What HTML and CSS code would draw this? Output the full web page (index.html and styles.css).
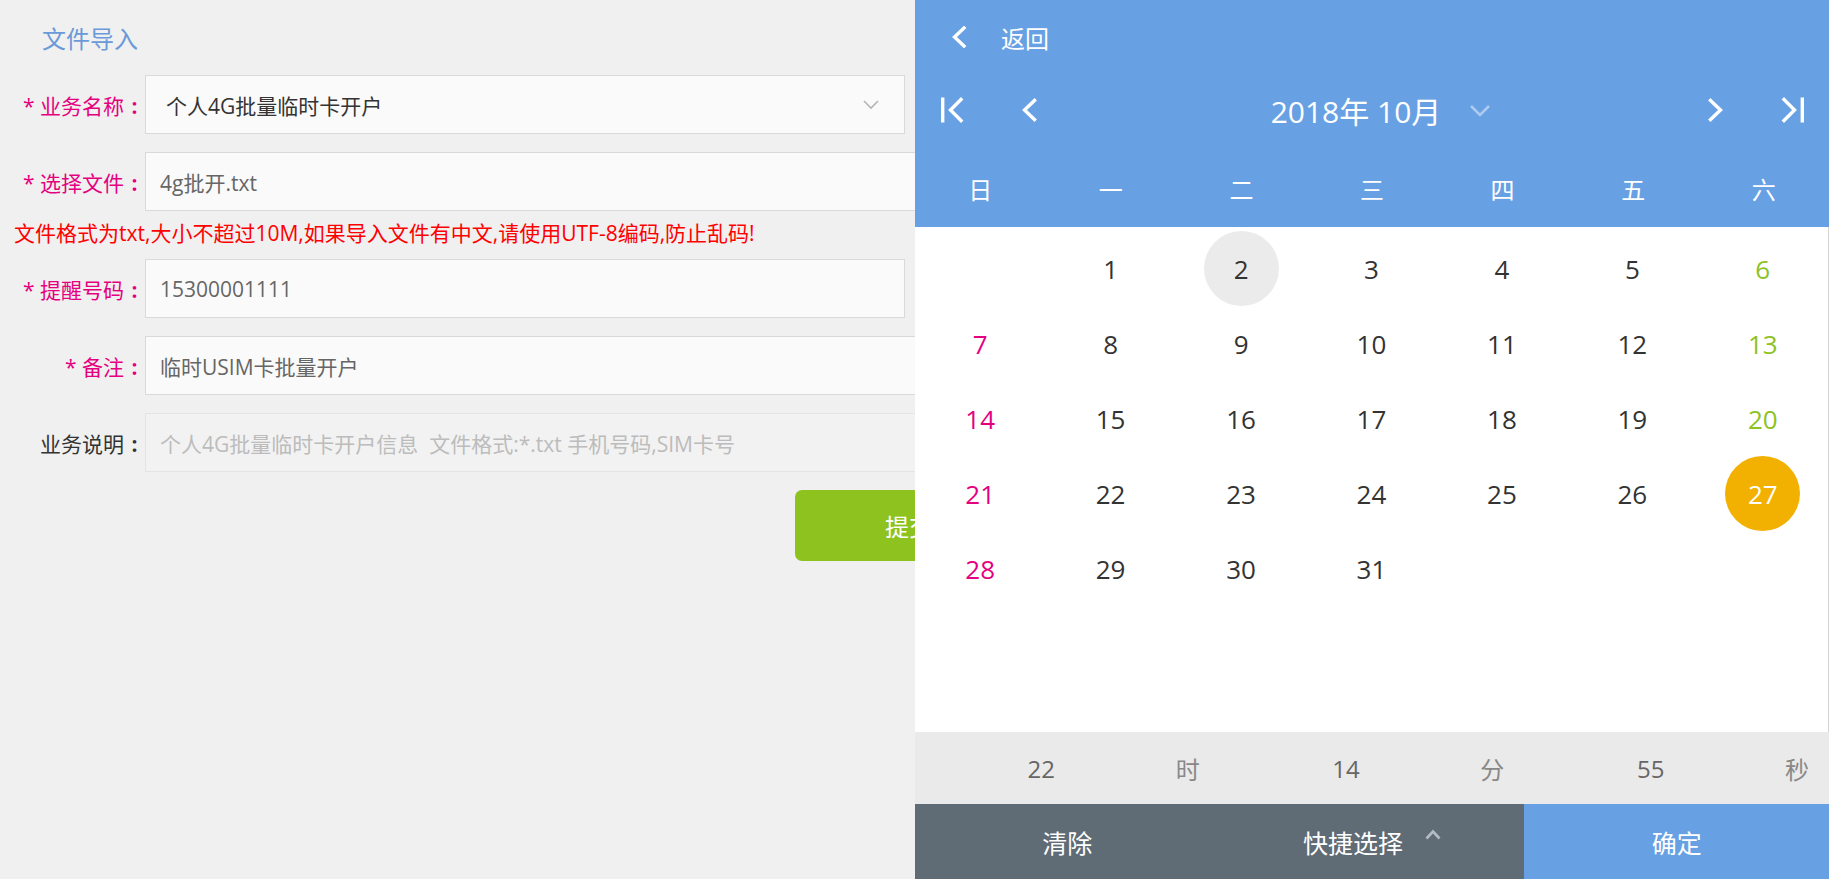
FILE: index.html
```html
<!DOCTYPE html>
<html lang="zh-CN">
<head>
<meta charset="utf-8">
<title>文件导入</title>
<link rel="stylesheet" href="styles.css">
</head>
<body>
<div class="page">
  <h2 class="title">文件导入</h2>
  <div class="form">
    <div class="row first">
      <label class="label">* 业务名称<span class="colon">:</span></label>
      <div class="field select short">
        <span>个人4G批量临时卡开户</span>
        <svg class="sel-arrow" width="16" height="10" viewBox="0 0 16 10"><polyline points="1,1 8,8 15,1" fill="none" stroke="#b5b5b5" stroke-width="1.6"/></svg>
      </div>
    </div>
    <div class="row">
      <label class="label">* 选择文件<span class="colon">:</span></label>
      <div class="field long">4g批开.txt</div>
    </div>
    <div class="error">文件格式为txt,大小不超过10M,如果导入文件有中文,请使用UTF-8编码,防止乱码!</div>
    <div class="row">
      <label class="label">* 提醒号码<span class="colon">:</span></label>
      <div class="field short">15300001111</div>
    </div>
    <div class="row">
      <label class="label">* 备注<span class="colon">:</span></label>
      <div class="field long">临时USIM卡批量开户</div>
    </div>
    <div class="row">
      <label class="label plain">业务说明<span class="colon">:</span></label>
      <div class="field long disabled">个人4G批量临时卡开户信息&nbsp; 文件格式:*.txt 手机号码,SIM卡号</div>
    </div>
    <div class="actions">
      <button class="submit">提交</button>
    </div>
  </div>
</div>

<div class="picker">
  <div class="pk-head">
    <div class="back-row">
      <svg width="16" height="22" viewBox="0 0 16 22"><polyline points="13,2 3.5,11 13,20" fill="none" stroke="#fff" stroke-width="3.4" stroke-linecap="square"/></svg>
      <span>返回</span>
    </div>
    <div class="nav-row">
      <div class="nav-group">
        <svg width="23" height="26" viewBox="0 0 23 26"><rect x="0" y="0.5" width="3.4" height="25" fill="#fff"/><polyline points="20,2.5 9.5,13 20,23.5" fill="none" stroke="#fff" stroke-width="3.4" stroke-linecap="square"/></svg>
        <svg class="gap" width="16" height="24" viewBox="0 0 16 24"><polyline points="13.5,2.5 3.5,12 13.5,21.5" fill="none" stroke="#fff" stroke-width="3.4" stroke-linecap="square"/></svg>
      </div>
      <div class="nav-title">
        <span>2018年 10月</span>
        <svg width="22" height="13" viewBox="0 0 22 13"><polyline points="2,2 11,11 20,2" fill="none" stroke="rgba(255,255,255,0.45)" stroke-width="2.6"/></svg>
      </div>
      <div class="nav-group">
        <svg width="16" height="24" viewBox="0 0 16 24"><polyline points="2.5,2.5 12.5,12 2.5,21.5" fill="none" stroke="#fff" stroke-width="3.4" stroke-linecap="square"/></svg>
        <svg class="gap" width="23" height="26" viewBox="0 0 23 26"><polyline points="3,2.5 13.5,13 3,23.5" fill="none" stroke="#fff" stroke-width="3.4" stroke-linecap="square"/><rect x="19.6" y="0.5" width="3.4" height="25" fill="#fff"/></svg>
      </div>
    </div>
    <div class="week-row">
      <span>日</span><span>一</span><span>二</span><span>三</span><span>四</span><span>五</span><span>六</span>
    </div>
  </div>

  <div class="days">
    <div class="day sun"></div>
    <div class="day"><span>1</span></div>
    <div class="day today"><span>2</span></div>
    <div class="day"><span>3</span></div>
    <div class="day"><span>4</span></div>
    <div class="day"><span>5</span></div>
    <div class="day sat"><span>6</span></div>

    <div class="day sun"><span>7</span></div>
    <div class="day"><span>8</span></div>
    <div class="day"><span>9</span></div>
    <div class="day"><span>10</span></div>
    <div class="day"><span>11</span></div>
    <div class="day"><span>12</span></div>
    <div class="day sat"><span>13</span></div>

    <div class="day sun"><span>14</span></div>
    <div class="day"><span>15</span></div>
    <div class="day"><span>16</span></div>
    <div class="day"><span>17</span></div>
    <div class="day"><span>18</span></div>
    <div class="day"><span>19</span></div>
    <div class="day sat"><span>20</span></div>

    <div class="day sun"><span>21</span></div>
    <div class="day"><span>22</span></div>
    <div class="day"><span>23</span></div>
    <div class="day"><span>24</span></div>
    <div class="day"><span>25</span></div>
    <div class="day"><span>26</span></div>
    <div class="day sat selected"><span>27</span></div>

    <div class="day sun"><span>28</span></div>
    <div class="day"><span>29</span></div>
    <div class="day"><span>30</span></div>
    <div class="day"><span>31</span></div>
  </div>

  <div class="time">
    <div class="tgroup"><span class="tnum">22</span><span class="tunit">时</span></div>
    <div class="tgroup"><span class="tnum">14</span><span class="tunit">分</span></div>
    <div class="tgroup"><span class="tnum">55</span><span class="tunit">秒</span></div>
  </div>

  <div class="btns">
    <div class="btn">清除</div>
    <div class="btn">快捷选择<svg width="16" height="11" viewBox="0 0 16 11"><polyline points="1.5,9.5 8,2.5 14.5,9.5" fill="none" stroke="#b3bcc4" stroke-width="2.6"/></svg></div>
    <div class="btn ok">确定</div>
  </div>
</div>
</body>
</html>
```

FILE: styles.css
```css
* {
  box-sizing: border-box;
}

html,
body {
  margin: 0;
  padding: 0;
}

body {
  width: 1830px;
  height: 879px;
  overflow: hidden;
  position: relative;
  background: #f0f0f0;
  font-family: "Open Sans", "Noto Sans CJK SC", sans-serif;
}

/* ---------- left form ---------- */
.page {
  padding-top: 23px;
}

.title {
  margin: 0 0 21px 42px;
  font-size: 24px;
  line-height: 31px;
  font-weight: normal;
  color: #6a9ad8;
}

.form {
  display: flex;
  flex-direction: column;
}

.row {
  display: flex;
  align-items: center;
  height: 59px;
  margin-top: 18px;
}

.row.first {
  margin-top: 0;
}

.error + .row {
  margin-top: 11px;
}

.label {
  flex: none;
  width: 145px;
  text-align: right;
  font-size: 21px;
  color: #e5007f;
}

.label.plain {
  color: #333;
}

.colon {
  display: inline-block;
  width: 1em;
  text-align: center;
  font-weight: bold;
}

.field {
  height: 59px;
  border: 1px solid #d9d9d9;
  background: #fafafa;
  font-size: 21px;
  color: #666;
  display: flex;
  align-items: center;
  padding-left: 14px;
  white-space: nowrap;
}

.field.short {
  width: 760px;
}

.field.long {
  width: 900px;
}

.field.select {
  color: #333;
  padding-left: 20px;
  padding-right: 25px;
  justify-content: space-between;
}

.field.disabled {
  background: #f2f2f2;
  border-color: #e4e4e4;
  color: #bcbcbc;
}

.error {
  margin: 7px 0 0 14px;
  font-size: 21px;
  line-height: 30px;
  color: #ff0000;
  white-space: nowrap;
}

.actions {
  margin-top: 18px;
  padding-left: 795px;
}

.submit {
  width: 228px;
  height: 71px;
  border: none;
  border-radius: 7px;
  background: #8dc21f;
  color: #fff;
  font-family: inherit;
  font-size: 24px;
}

/* ---------- date picker panel ---------- */
.picker {
  position: absolute;
  top: 0;
  right: 0;
  width: 915px;
  height: 879px;
  display: flex;
  flex-direction: column;
  background: #fff;
  padding-right: 1px;
}

.pk-head {
  height: 227px;
  flex: none;
  background: #68a1e3;
  color: #fff;
  display: flex;
  flex-direction: column;
}

.back-row {
  height: 74px;
  display: flex;
  align-items: center;
  padding-left: 36px;
  font-size: 24px;
}

.back-row svg {
  margin-right: 34px;
}

.nav-row {
  height: 72px;
  display: flex;
  align-items: center;
  padding: 0 25px 0 26px;
}

.nav-group {
  display: flex;
  align-items: center;
}

.nav-group .gap {
  margin-left: 57px;
}

.nav-title {
  flex: 1;
  display: flex;
  align-items: center;
  justify-content: center;
  padding-left: 17px;
  font-size: 30px;
}

.nav-title svg {
  margin-left: 28px;
}

.week-row {
  margin-top: 6px;
  height: 72px;
  display: grid;
  grid-template-columns: repeat(7, 1fr);
  align-items: center;
  text-align: center;
  font-size: 24px;
}

.days {
  flex: 1;
  display: grid;
  grid-template-columns: repeat(7, 1fr);
  grid-auto-rows: 75px;
  align-content: start;
  padding-top: 4px;
  border-right: 1px solid #d4d4d4;
  font-size: 26px;
  color: #333;
}

.day {
  display: flex;
  align-items: center;
  justify-content: center;
}

.day span {
  width: 75px;
  height: 75px;
  border-radius: 50%;
  display: flex;
  align-items: center;
  justify-content: center;
}

.day.sun {
  color: #e5007f;
}

.day.sat {
  color: #8dc21f;
}

.day.today span {
  background: #ebebeb;
}

.day.selected span {
  background: #f2b100;
  color: #fff;
}

.time {
  height: 72px;
  flex: none;
  background: #eaeaea;
  display: grid;
  grid-template-columns: repeat(3, 1fr);
  font-size: 24px;
}

.tgroup {
  display: flex;
  align-items: center;
  padding-right: 12px;
}

.tnum {
  flex: 1;
  text-align: center;
  color: #666;
}

.tunit {
  width: 40px;
  text-align: center;
  color: #888;
}

.btns {
  height: 75px;
  flex: none;
  display: grid;
  grid-template-columns: repeat(3, 1fr);
  font-size: 25px;
  color: #fff;
}

.btn {
  display: flex;
  align-items: center;
  justify-content: center;
  background: #5f6b75;
}

.btn svg {
  margin-left: 22px;
  margin-top: -14px;
}

.btn.ok {
  background: #68a1e3;
}
```
